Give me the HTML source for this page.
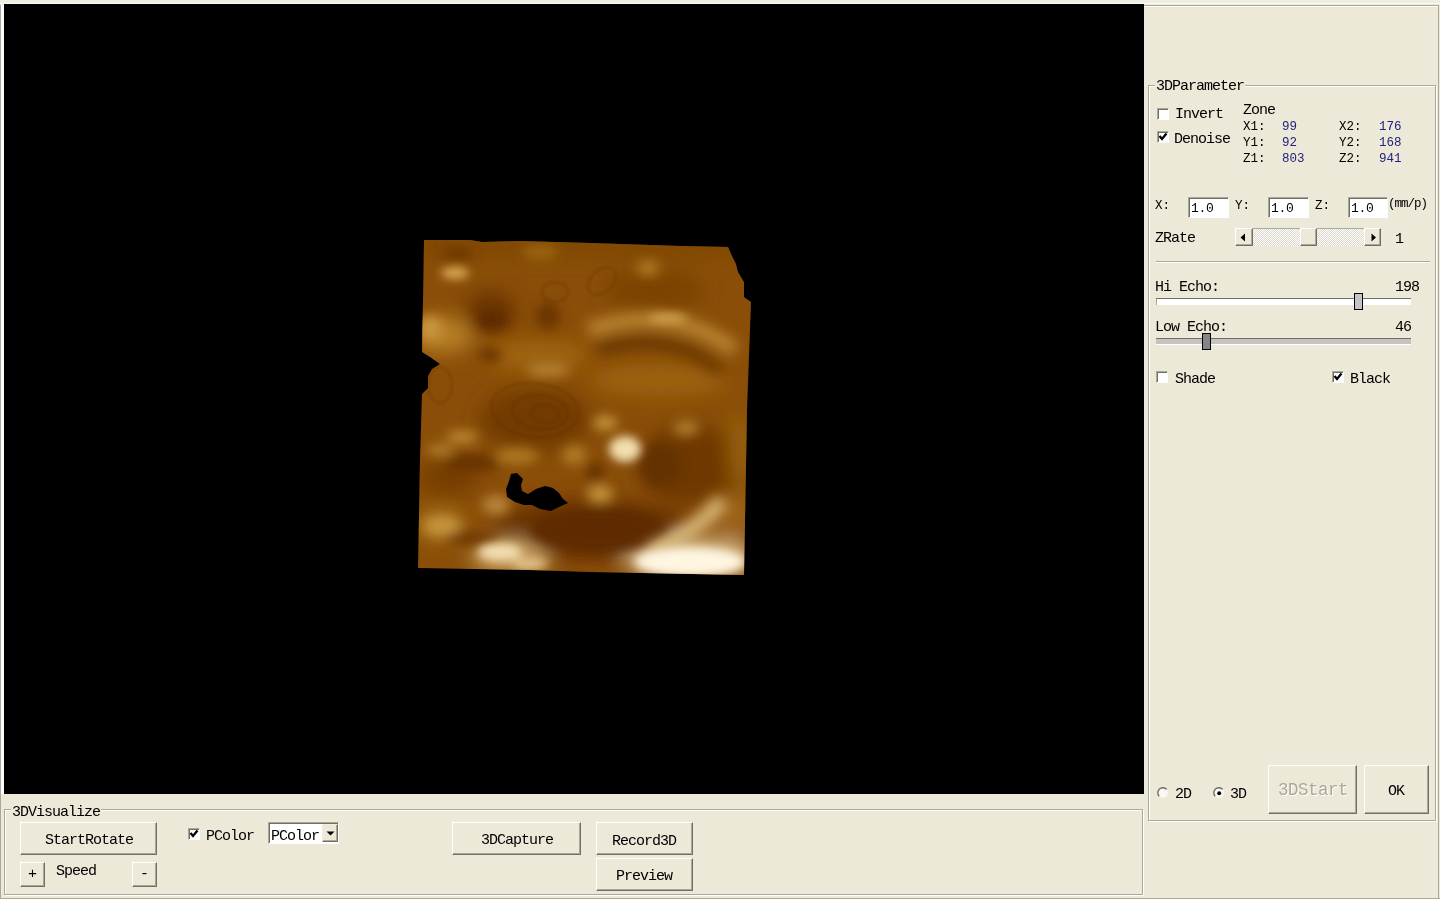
<!DOCTYPE html>
<html><head><meta charset="utf-8">
<style>
html,body{margin:0;padding:0;width:1440px;height:900px;overflow:hidden;background:#ECE9D8;}
body{position:relative;font-family:"Liberation Mono",monospace;color:#000;-webkit-font-smoothing:antialiased;}
div{will-change:transform;}
.a{position:absolute;}
.t{position:absolute;font-size:15px;line-height:14px;letter-spacing:-1.0px;margin-top:1px;white-space:nowrap;}
.s{position:absolute;font-size:12.5px;line-height:12px;letter-spacing:0px;white-space:nowrap;}
.btn{position:absolute;box-sizing:border-box;background:#ECE9D8;border-top:1px solid #fff;border-left:1px solid #fff;border-right:1px solid #716F64;border-bottom:1px solid #716F64;box-shadow:inset -1px -1px 0 #ACA899;}
.grp{position:absolute;box-sizing:border-box;border:1px solid #ACA899;box-shadow:inset 1px 1px 0 #fff,1px 1px 0 #fff;}
.cb{position:absolute;box-sizing:border-box;width:12px;height:12px;background:#fff;border-top:1px solid #ACA899;border-left:1px solid #ACA899;border-right:1px solid #fff;border-bottom:1px solid #fff;box-shadow:inset 1px 1px 0 #716F64;}
.ed{position:absolute;box-sizing:border-box;background:#fff;border-top:1px solid #ACA899;border-left:1px solid #ACA899;border-right:1px solid #fff;border-bottom:1px solid #fff;box-shadow:inset 1px 1px 0 #716F64;}
</style></head><body>
<!-- top strip / outer frame -->
<div class="a" style="left:0;top:0;width:1440px;height:3px;background:#EEEEE2"></div>
<div class="a" style="left:0;top:3px;width:1440px;height:1px;background:#FBFBF2"></div>
<div class="a" style="left:0;top:5px;width:1px;height:895px;background:#ACA899"></div>
<div class="a" style="left:1px;top:5px;width:3px;height:789px;background:#fff"></div>
<!-- black viewport -->
<div class="a" style="left:4px;top:4px;width:1140px;height:790px;background:#000"></div>


<!-- ultrasound render -->
<svg class="a" style="left:400px;top:230px" width="360" height="360" viewBox="400 230 360 360">
<defs>
<clipPath id="cp"><path d="M424 240 L470 240 L482 242 L520 241 L590 243 L680 246 L728 247 L731 254 L736 264 L738 272 L744 282 L744 297 L751 302 L747 410 L744 575 L590 572 L530 570 L418 568 L420 460 L422 394 L428 388 L428 376 L432 369 L440 364 L430 357 L422 352 L423 300 Z"/></clipPath>
<filter id="b1" x="-50%" y="-50%" width="200%" height="200%"><feGaussianBlur stdDeviation="10"/></filter>
<filter id="b2" x="-50%" y="-50%" width="200%" height="200%"><feGaussianBlur stdDeviation="6"/></filter>
<filter id="b5" x="-50%" y="-50%" width="200%" height="200%"><feGaussianBlur stdDeviation="7"/></filter>
<filter id="b4" x="-50%" y="-50%" width="200%" height="200%"><feGaussianBlur stdDeviation="5"/></filter>
<filter id="b3" x="-50%" y="-50%" width="200%" height="200%"><feGaussianBlur stdDeviation="0.8"/></filter>
</defs>
<g clip-path="url(#cp)">
<rect x="400" y="230" width="360" height="360" fill="#8A4E08"/>
<g filter="url(#b1)">
<rect x="420" y="236" width="330" height="20" fill="#7E4606"/>
<ellipse cx="490" cy="312" rx="26" ry="22" fill="#6C3604"/>
<ellipse cx="655" cy="290" rx="50" ry="20" fill="#7A4206"/>
<ellipse cx="535" cy="420" rx="55" ry="32" fill="#723A04"/>
<ellipse cx="690" cy="465" rx="52" ry="40" fill="#6E3804"/>
<ellipse cx="590" cy="530" rx="100" ry="30" fill="#683202"/>
<ellipse cx="448" cy="478" rx="30" ry="18" fill="#763E06"/>
<ellipse cx="442" cy="335" rx="32" ry="18" fill="#B88028"/>
<ellipse cx="535" cy="355" rx="55" ry="14" fill="#A06610"/>
<ellipse cx="660" cy="380" rx="70" ry="16" fill="#9C6410"/>
<ellipse cx="440" cy="525" rx="24" ry="14" fill="#B07A24"/>
<ellipse cx="690" cy="558" rx="66" ry="20" fill="#DCC090"/>
<ellipse cx="510" cy="556" rx="40" ry="16" fill="#C8A060"/>
<ellipse cx="735" cy="515" rx="18" ry="24" fill="#9C6414"/>
<ellipse cx="740" cy="450" rx="10" ry="36" fill="#9A6410"/>
</g>
<g filter="url(#b2)">
<ellipse cx="492" cy="320" rx="16" ry="10" fill="#5E2C02"/>
<ellipse cx="457" cy="254" rx="16" ry="6" fill="#6A3404"/>
<ellipse cx="548" cy="316" rx="12" ry="14" fill="#6A3404"/>
<ellipse cx="430" cy="328" rx="12" ry="12" fill="#C8963C"/>
<ellipse cx="548" cy="370" rx="22" ry="6" fill="#B8843A"/>
<ellipse cx="490" cy="355" rx="12" ry="8" fill="#6C3604"/>
<ellipse cx="648" cy="268" rx="12" ry="8" fill="#AE7620"/>
<ellipse cx="540" cy="252" rx="18" ry="6" fill="#A06A16"/>
<ellipse cx="462" cy="437" rx="16" ry="6" fill="#C08C38"/>
<ellipse cx="440" cy="450" rx="14" ry="5" fill="#B88430"/>
<ellipse cx="517" cy="456" rx="22" ry="8" fill="#AE7824"/>
<ellipse cx="472" cy="463" rx="28" ry="9" fill="#683202"/>
<ellipse cx="496" cy="505" rx="14" ry="10" fill="#B8843A"/>
<ellipse cx="442" cy="526" rx="18" ry="9" fill="#C8963C"/>
<ellipse cx="472" cy="538" rx="28" ry="7" fill="#6E3804"/>
<ellipse cx="574" cy="455" rx="12" ry="10" fill="#B07A28"/>
<ellipse cx="605" cy="423" rx="12" ry="7" fill="#C8983E"/>
<ellipse cx="600" cy="494" rx="13" ry="8" fill="#C8983E"/>
<ellipse cx="686" cy="428" rx="13" ry="8" fill="#B07C2A"/>
<ellipse cx="660" cy="465" rx="20" ry="22" fill="#643002"/>
<ellipse cx="595" cy="472" rx="10" ry="10" fill="#683202"/>
<ellipse cx="600" cy="530" rx="70" ry="22" fill="#5E2C02"/>
</g>
<g filter="url(#b5)">
<path d="M588 330 Q670 302 735 350" stroke="#BC8834" stroke-width="14" fill="none"/>
<path d="M598 350 Q670 328 722 372" stroke="#683402" stroke-width="12" fill="none"/>
<path d="M722 500 Q700 530 650 552" stroke="#D8B878" stroke-width="16" fill="none"/>
</g>
<g filter="url(#b4)">
<ellipse cx="455" cy="273" rx="14" ry="6" fill="#DCAC54"/>
<ellipse cx="625" cy="449" rx="16" ry="13" fill="#F2DEAE"/>
<ellipse cx="690" cy="562" rx="55" ry="14" fill="#FFF6E2"/>
<ellipse cx="500" cy="552" rx="22" ry="9" fill="#F2DEB0"/>
<ellipse cx="530" cy="564" rx="18" ry="5" fill="#E8CC94"/>
<ellipse cx="668" cy="318" rx="20" ry="4" fill="#D4A858"/>
</g>
<g filter="url(#b3)" fill="none" stroke="#5A2C02" stroke-width="1.3" opacity="0.35">
<ellipse cx="535" cy="410" rx="44" ry="27" transform="rotate(6 535 410)"/>
<ellipse cx="540" cy="412" rx="28" ry="17" transform="rotate(6 540 412)"/>
<ellipse cx="545" cy="414" rx="14" ry="9" transform="rotate(6 545 414)"/>
<ellipse cx="602" cy="281" rx="11" ry="16" transform="rotate(45 602 281)"/>
<ellipse cx="555" cy="292" rx="13" ry="10"/>
<ellipse cx="440" cy="385" rx="12" ry="18"/>
</g>
<path d="M511 474 L517 473 L523 479 L521 485 L522 491 L528 494 L536 489 L545 486 L553 488 L559 493 L563 499 L568 503 L559 507 L551 511 L540 509 L532 505 L524 505 L515 502 L507 497 L506 489 L509 481 Z" fill="#000"/>
</g>
</svg>
<!-- right panel frame -->
<div class="a" style="left:1144px;top:5px;width:295px;height:1px;background:#ACA899"></div>
<div class="a" style="left:1144px;top:6px;width:294px;height:1px;background:#fff"></div>
<div class="a" style="left:1438px;top:5px;width:1px;height:894px;background:#ACA899"></div>
<div class="a" style="left:1144px;top:898px;width:295px;height:1px;background:#ACA899"></div>

<!-- 3DParameter group -->
<div class="grp" style="left:1148px;top:85px;width:288px;height:736px"></div>
<div class="t" style="left:1155px;top:79px;background:#ECE9D8;padding:0 1px">3DParameter</div>

<!-- bottom 3DVisualize group -->
<div class="a" style="left:0;top:898px;width:1440px;height:1px;background:#ACA899"></div><div class="a" style="left:0;top:899px;width:1440px;height:1px;background:#fff"></div>
<div class="grp" style="left:4px;top:809px;width:1139px;height:86px"></div>
<div class="t" style="left:11px;top:805px;background:#ECE9D8;padding:0 1px">3DVisualize</div>


<!-- right panel controls -->
<div class="cb" style="left:1157px;top:108px"></div>
<div class="t" style="left:1175px;top:107px">Invert</div>
<div class="cb" style="left:1157px;top:131px"></div>
<svg class="a" style="left:1157px;top:131px" width="12" height="12"><path d="M2.5 5 L5 8 L9.5 2.5" stroke="#000" stroke-width="2.3" fill="none"/></svg>
<div class="t" style="left:1174px;top:132px">Denoise</div>
<div class="t" style="left:1243px;top:103px">Zone</div>
<div class="s" style="left:1243px;top:121px">X1:</div>
<div class="s" style="left:1243px;top:137px">Y1:</div>
<div class="s" style="left:1243px;top:153px">Z1:</div>
<div class="s" style="left:1282px;top:121px;color:#22227E">99</div>
<div class="s" style="left:1282px;top:137px;color:#22227E">92</div>
<div class="s" style="left:1282px;top:153px;color:#22227E">803</div>
<div class="s" style="left:1339px;top:121px">X2:</div>
<div class="s" style="left:1339px;top:137px">Y2:</div>
<div class="s" style="left:1339px;top:153px">Z2:</div>
<div class="s" style="left:1379px;top:121px;color:#22227E">176</div>
<div class="s" style="left:1379px;top:137px;color:#22227E">168</div>
<div class="s" style="left:1379px;top:153px;color:#22227E">941</div>

<div class="s" style="left:1155px;top:200px">X:</div>
<div class="ed" style="left:1188px;top:197px;width:41px;height:21px"></div>
<div class="a" style="left:1191px;top:203px;font-size:13px;line-height:12px;letter-spacing:-0.3px">1.0</div>
<div class="s" style="left:1235px;top:200px">Y:</div>
<div class="ed" style="left:1268px;top:197px;width:41px;height:21px"></div>
<div class="a" style="left:1271px;top:203px;font-size:13px;line-height:12px;letter-spacing:-0.3px">1.0</div>
<div class="s" style="left:1315px;top:200px">Z:</div>
<div class="ed" style="left:1348px;top:197px;width:40px;height:21px"></div>
<div class="a" style="left:1351px;top:203px;font-size:13px;line-height:12px;letter-spacing:-0.3px">1.0</div>
<div class="s" style="left:1388px;top:198px;letter-spacing:-1px">(mm/p)</div>

<div class="t" style="left:1155px;top:231px">ZRate</div>
<!-- scrollbar -->
<div class="a" style="left:1235px;top:228px;width:146px;height:18px;box-sizing:border-box;border-top:1px solid #ACA899;background-color:#F4F3EE;background-image:repeating-conic-gradient(#DCD9CC 0 25%, #FFFFFF 0 50%);background-size:2px 2px"></div>
<div class="btn" style="left:1235px;top:228px;width:18px;height:18px"></div>
<svg class="a" style="left:1239px;top:233px" width="8" height="9"><path d="M6 0.5 L6 8.5 L1.5 4.5 Z" fill="#000"/></svg>
<div class="btn" style="left:1300px;top:228px;width:17px;height:18px"></div>
<div class="btn" style="left:1364px;top:228px;width:17px;height:18px"></div>
<svg class="a" style="left:1370px;top:233px" width="8" height="9"><path d="M1.5 0.5 L1.5 8.5 L6 4.5 Z" fill="#000"/></svg>
<div class="t" style="left:1395px;top:232px">1</div>

<div class="a" style="left:1156px;top:261px;width:274px;height:1px;background:#ACA899"></div>
<div class="a" style="left:1156px;top:262px;width:274px;height:1px;background:#fff"></div>

<div class="t" style="left:1155px;top:280px">Hi Echo:</div>
<div class="t" style="left:1395px;top:280px">198</div>
<div class="a" style="left:1156px;top:298px;width:255px;height:1px;background:#716F64"></div>
<div class="a" style="left:1156px;top:299px;width:1px;height:6px;background:#ACA899"></div>
<div class="a" style="left:1157px;top:299px;width:254px;height:6px;background:#fff"></div>
<div class="a" style="left:1354px;top:293px;width:9px;height:17px;box-sizing:border-box;border:1px solid #000;background:#C4C4C8"></div>

<div class="t" style="left:1155px;top:320px">Low Echo:</div>
<div class="t" style="left:1395px;top:320px">46</div>
<div class="a" style="left:1156px;top:338px;width:255px;height:1px;background:#716F64"></div>
<div class="a" style="left:1156px;top:339px;width:255px;height:5px;background:#C4C3C0"></div>
<div class="a" style="left:1156px;top:344px;width:255px;height:1px;background:#fff"></div>
<div class="a" style="left:1202px;top:333px;width:9px;height:17px;box-sizing:border-box;border:1px solid #000;background:#858585"></div>

<div class="cb" style="left:1156px;top:371px"></div>
<div class="t" style="left:1175px;top:372px">Shade</div>
<div class="cb" style="left:1332px;top:371px"></div>
<svg class="a" style="left:1332px;top:371px" width="12" height="12"><path d="M2.5 5 L5 8 L9.5 2.5" stroke="#000" stroke-width="2.3" fill="none"/></svg>
<div class="t" style="left:1350px;top:372px">Black</div>

<!-- radios and buttons -->
<svg class="a" style="left:1157px;top:787px" width="12" height="12"><circle cx="6" cy="6" r="5" fill="#F8F8F4"/><path d="M2.2 9.2 A4.8 4.8 0 0 1 9.6 2.3" stroke="#716F64" stroke-width="1.4" fill="none"/></svg>
<div class="t" style="left:1175px;top:787px">2D</div>
<svg class="a" style="left:1213px;top:787px" width="12" height="12"><circle cx="6" cy="6" r="5" fill="#F8F8F4"/><path d="M2.2 9.2 A4.8 4.8 0 0 1 9.6 2.3" stroke="#716F64" stroke-width="1.4" fill="none"/><circle cx="6.2" cy="6.2" r="2" fill="#000"/></svg>
<div class="t" style="left:1230px;top:787px">3D</div>
<div class="btn" style="left:1268px;top:765px;width:89px;height:49px"></div>
<div class="a" style="left:1278px;top:782px;font-size:17.5px;line-height:16px;letter-spacing:-0.5px;color:#ACA899;text-shadow:1px 1px 0 #fff">3DStart</div>
<div class="btn" style="left:1364px;top:765px;width:65px;height:49px"></div>
<div class="t" style="left:1388px;top:784px">OK</div>

<!-- bottom controls -->
<div class="btn" style="left:20px;top:822px;width:137px;height:33px"></div>
<div class="t" style="left:45px;top:833px">StartRotate</div>
<div class="btn" style="left:20px;top:862px;width:25px;height:25px"></div>
<div class="t" style="left:28px;top:867px">+</div>
<div class="t" style="left:56px;top:864px">Speed</div>
<div class="btn" style="left:132px;top:862px;width:25px;height:25px"></div>
<div class="t" style="left:140px;top:867px">-</div>
<div class="cb" style="left:188px;top:828px"></div>
<svg class="a" style="left:188px;top:828px" width="12" height="12"><path d="M2.5 5 L5 8 L9.5 2.5" stroke="#000" stroke-width="2.3" fill="none"/></svg>
<div class="t" style="left:206px;top:829px">PColor</div>
<div class="ed" style="left:268px;top:822px;width:71px;height:22px"></div>
<div class="t" style="left:271px;top:829px">PColor</div>
<div class="btn" style="left:322px;top:824px;width:16px;height:18px;border-top-color:#F1EFE2;border-left-color:#F1EFE2"></div>
<svg class="a" style="left:326px;top:831px" width="9" height="5"><path d="M0.5 0.5 L8.5 0.5 L4.5 4.5 Z" fill="#000"/></svg>
<div class="btn" style="left:452px;top:822px;width:129px;height:33px"></div>
<div class="t" style="left:481px;top:833px">3DCapture</div>
<div class="btn" style="left:596px;top:822px;width:97px;height:33px"></div>
<div class="t" style="left:612px;top:834px">Record3D</div>
<div class="btn" style="left:596px;top:858px;width:97px;height:33px"></div>
<div class="t" style="left:616px;top:869px">Preview</div>
</body></html>
